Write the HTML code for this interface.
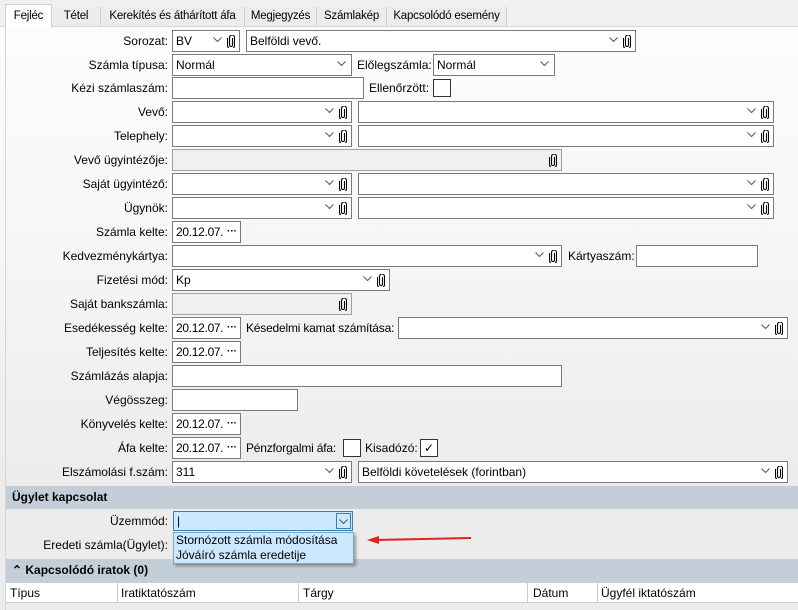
<!DOCTYPE html>
<html><head><meta charset="utf-8"><style>
*{margin:0;padding:0;box-sizing:border-box}
body{width:798px;height:610px;overflow:hidden;position:relative;font-family:"Liberation Sans",sans-serif;font-size:12px;color:#000;background:linear-gradient(#fdfdfd 0px,#f6f6f6 250px,#ececec 480px)}
.a{position:absolute}
.l{position:absolute;left:0;width:168px;text-align:right;line-height:22px;white-space:nowrap}
.t{position:absolute;line-height:22px;white-space:nowrap}
.b{position:absolute;height:22px;border:1px solid #7a7a7a;background:#fff;padding-left:3px;line-height:20px;white-space:nowrap}
.g{background:#f0f0f0;border-color:#a0a0a0}
.cv{position:absolute;top:6px;width:9px;height:6px}
.cp{position:absolute;top:4px;width:8px;height:13px}
.dt{position:absolute;right:3px;top:0;font-weight:bold;font-size:10px;letter-spacing:0}
.cb{position:absolute;width:18px;height:18px;border:1px solid #333;background:#fff}
.tab{position:absolute;top:7px;height:19px;line-height:18px;border-right:1px solid #d0d0d0;background:#ececec;font-size:11.5px;white-space:nowrap;text-align:center;letter-spacing:-0.2px}
.sec{position:absolute;left:6px;right:0;background:#c3ced9;font-weight:bold;line-height:23px;padding-left:6px}
</style></head><body>
<svg width="0" height="0" style="position:absolute"><defs>
<symbol id="c" viewBox="0 0 9 6"><polyline points="0.5,0.5 4.5,4.5 8.5,0.5" fill="none" stroke="#555" stroke-width="1"/></symbol>
<symbol id="p" viewBox="0 0 8 13"><path d="M5.5,3 V10 A1.5,1.5 0 0 1 2.5,10 V2.5 A2.5,2.5 0 0 1 7.5,2.5 V10.5 A3.5,3.5 0 0 1 0.5,10.5 V3" fill="none" stroke="#000" stroke-width="1.1"/></symbol>
</defs></svg>
<div class="a" style="left:0;top:0;width:798px;height:27px;background:#f0f0f0;border-bottom:1px solid #d6d6d6"></div>
<div class="a" style="left:5px;top:27px;width:1px;height:583px;background:#d6d6d6"></div>
<div class="tab" style="left:5px;top:4px;height:24px;width:47px;background:#fff;border:1px solid #d0d0d0;border-bottom:none;line-height:22px">Fejléc</div>
<div class="tab" style="left:52px;width:49px">Tétel</div>
<div class="tab" style="left:101px;width:144px">Kerekítés és áthárított áfa</div>
<div class="tab" style="left:245px;width:72px">Megjegyzés</div>
<div class="tab" style="left:317px;width:70px">Számlakép</div>
<div class="tab" style="left:387px;width:120px">Kapcsolódó esemény</div>

<div class="l" style="top:30px">Sorozat:</div>
<div class="b" style="left:172px;top:30px;width:68px">BV<svg class="cv" style="right:17px"><use href="#c"/></svg><svg class="cp" style="right:4px"><use href="#p"/></svg></div>
<div class="b" style="left:246px;top:30px;width:390px">Belföldi vevő.<svg class="cv" style="right:17px"><use href="#c"/></svg><svg class="cp" style="right:4px"><use href="#p"/></svg></div>

<div class="l" style="top:54px">Számla típusa:</div>
<div class="b" style="left:172px;top:54px;width:180px">Normál<svg class="cv" style="right:5px"><use href="#c"/></svg></div>
<div class="t" style="left:357px;top:54px">Előlegszámla:</div>
<div class="b" style="left:433px;top:54px;width:122px">Normál<svg class="cv" style="right:5px"><use href="#c"/></svg></div>

<div class="l" style="top:77px">Kézi számlaszám:</div>
<div class="b" style="left:172px;top:77px;width:192px"></div>
<div class="t" style="left:369px;top:77px">Ellenőrzött:</div>
<div class="cb" style="left:433px;top:79px"></div>

<div class="l" style="top:101px">Vevő:</div>
<div class="b" style="left:172px;top:101px;width:180px"><svg class="cv" style="right:17px"><use href="#c"/></svg><svg class="cp" style="right:4px"><use href="#p"/></svg></div>
<div class="b" style="left:358px;top:101px;width:416px"><svg class="cv" style="right:17px"><use href="#c"/></svg><svg class="cp" style="right:4px"><use href="#p"/></svg></div>

<div class="l" style="top:125px">Telephely:</div>
<div class="b" style="left:172px;top:125px;width:180px"><svg class="cv" style="right:17px"><use href="#c"/></svg><svg class="cp" style="right:4px"><use href="#p"/></svg></div>
<div class="b" style="left:358px;top:125px;width:416px"><svg class="cv" style="right:17px"><use href="#c"/></svg><svg class="cp" style="right:4px"><use href="#p"/></svg></div>

<div class="l" style="top:149px">Vevő ügyintézője:</div>
<div class="b g" style="left:172px;top:149px;width:390px"><svg class="cp" style="right:4px"><use href="#p"/></svg></div>

<div class="l" style="top:173px">Saját ügyintéző:</div>
<div class="b" style="left:172px;top:173px;width:180px"><svg class="cv" style="right:17px"><use href="#c"/></svg><svg class="cp" style="right:4px"><use href="#p"/></svg></div>
<div class="b" style="left:358px;top:173px;width:416px"><svg class="cv" style="right:17px"><use href="#c"/></svg><svg class="cp" style="right:4px"><use href="#p"/></svg></div>

<div class="l" style="top:197px">Ügynök:</div>
<div class="b" style="left:172px;top:197px;width:180px"><svg class="cv" style="right:17px"><use href="#c"/></svg><svg class="cp" style="right:4px"><use href="#p"/></svg></div>
<div class="b" style="left:358px;top:197px;width:416px"><svg class="cv" style="right:17px"><use href="#c"/></svg><svg class="cp" style="right:4px"><use href="#p"/></svg></div>

<div class="l" style="top:221px">Számla kelte:</div>
<div class="b" style="left:172px;top:221px;width:69px;letter-spacing:-0.3px">20.12.07.<span class="dt">···</span></div>

<div class="l" style="top:245px">Kedvezménykártya:</div>
<div class="b" style="left:172px;top:245px;width:390px"><svg class="cv" style="right:17px"><use href="#c"/></svg><svg class="cp" style="right:4px"><use href="#p"/></svg></div>
<div class="t" style="left:568px;top:245px">Kártyaszám:</div>
<div class="b" style="left:636px;top:245px;width:122px"></div>

<div class="l" style="top:269px">Fizetési mód:</div>
<div class="b" style="left:172px;top:269px;width:218px">Kp<svg class="cv" style="right:17px"><use href="#c"/></svg><svg class="cp" style="right:4px"><use href="#p"/></svg></div>

<div class="l" style="top:293px">Saját bankszámla:</div>
<div class="b g" style="left:172px;top:293px;width:180px"><svg class="cp" style="right:4px"><use href="#p"/></svg></div>

<div class="l" style="top:317px">Esedékesség kelte:</div>
<div class="b" style="left:172px;top:317px;width:69px;letter-spacing:-0.3px">20.12.07.<span class="dt">···</span></div>
<div class="t" style="left:246px;top:317px;letter-spacing:-0.2px">Késedelmi kamat számítása:</div>
<div class="b" style="left:398px;top:317px;width:390px"><svg class="cv" style="right:17px"><use href="#c"/></svg><svg class="cp" style="right:4px"><use href="#p"/></svg></div>

<div class="l" style="top:341px">Teljesítés kelte:</div>
<div class="b" style="left:172px;top:341px;width:69px;letter-spacing:-0.3px">20.12.07.<span class="dt">···</span></div>

<div class="l" style="top:365px">Számlázás alapja:</div>
<div class="b" style="left:172px;top:365px;width:390px"></div>

<div class="l" style="top:389px">Végösszeg:</div>
<div class="b" style="left:172px;top:389px;width:126px"></div>

<div class="l" style="top:413px">Könyvelés kelte:</div>
<div class="b" style="left:172px;top:413px;width:69px;letter-spacing:-0.3px">20.12.07.<span class="dt">···</span></div>

<div class="l" style="top:437px">Áfa kelte:</div>
<div class="b" style="left:172px;top:437px;width:69px;letter-spacing:-0.3px">20.12.07.<span class="dt">···</span></div>
<div class="t" style="left:246px;top:437px;letter-spacing:-0.2px">Pénzforgalmi áfa:</div>
<div class="cb" style="left:343px;top:439px"></div>
<div class="t" style="left:365px;top:437px">Kisadózó:</div>
<div class="cb" style="left:420px;top:439px;font-size:12px;line-height:16px;text-align:center">✓</div>

<div class="l" style="top:461px">Elszámolási f.szám:</div>
<div class="b" style="left:172px;top:461px;width:180px">311<svg class="cv" style="right:17px"><use href="#c"/></svg><svg class="cp" style="right:4px"><use href="#p"/></svg></div>
<div class="b" style="left:358px;top:461px;width:430px">Belföldi követelések (forintban)<svg class="cv" style="right:17px"><use href="#c"/></svg><svg class="cp" style="right:4px"><use href="#p"/></svg></div>

<div class="sec" style="top:486px;height:23px">Ügylet kapcsolat</div>
<div class="l" style="top:510px">Üzemmód:</div>
<div class="b" style="left:173px;top:511px;width:180px;height:20px;background:#cce8ff;border-color:#3c7fb1;line-height:18px">|<div class="a" style="right:1px;top:1px;width:15px;height:16px;border:1px solid #3c7fb1"><svg class="cv" style="right:2px;top:5px"><use href="#c"/></svg></div></div>
<div class="l" style="top:534px">Eredeti számla(Ügylet):</div>

<div class="sec" style="top:559px;height:24px">⌃ Kapcsolódó iratok (0)</div>
<div class="a" style="left:173px;top:532px;width:181px;height:32px;background:#cce8ff;border:1px solid #7aa7cc;box-shadow:2px 2px 3px rgba(0,0,0,.35);line-height:15px;padding-left:2px">Stornózott számla módosítása<br>Jóváíró számla eredetije</div>

<svg class="a" style="left:365px;top:532px" width="108" height="16"><line x1="10" y1="8" x2="106" y2="6" stroke="#d22" stroke-width="2"/><polygon points="2,8 14,4 14,12" fill="#d22"/></svg>

<div class="a" style="left:6px;top:583px;width:792px;height:20px;background:#fff;border-bottom:1px solid #d0d0d0"></div>
<div class="t" style="left:10px;top:582px">Típus</div>
<div class="a" style="left:117px;top:583px;width:1px;height:20px;background:#ccc"></div>
<div class="t" style="left:121px;top:582px">Iratiktatószám</div>
<div class="a" style="left:298px;top:583px;width:1px;height:20px;background:#ccc"></div>
<div class="t" style="left:303px;top:582px">Tárgy</div>
<div class="a" style="left:527px;top:583px;width:1px;height:20px;background:#ccc"></div>
<div class="t" style="left:533px;top:582px">Dátum</div>
<div class="a" style="left:597px;top:583px;width:1px;height:20px;background:#ccc"></div>
<div class="t" style="left:601px;top:582px">Ügyfél iktatószám</div>
</body></html>
